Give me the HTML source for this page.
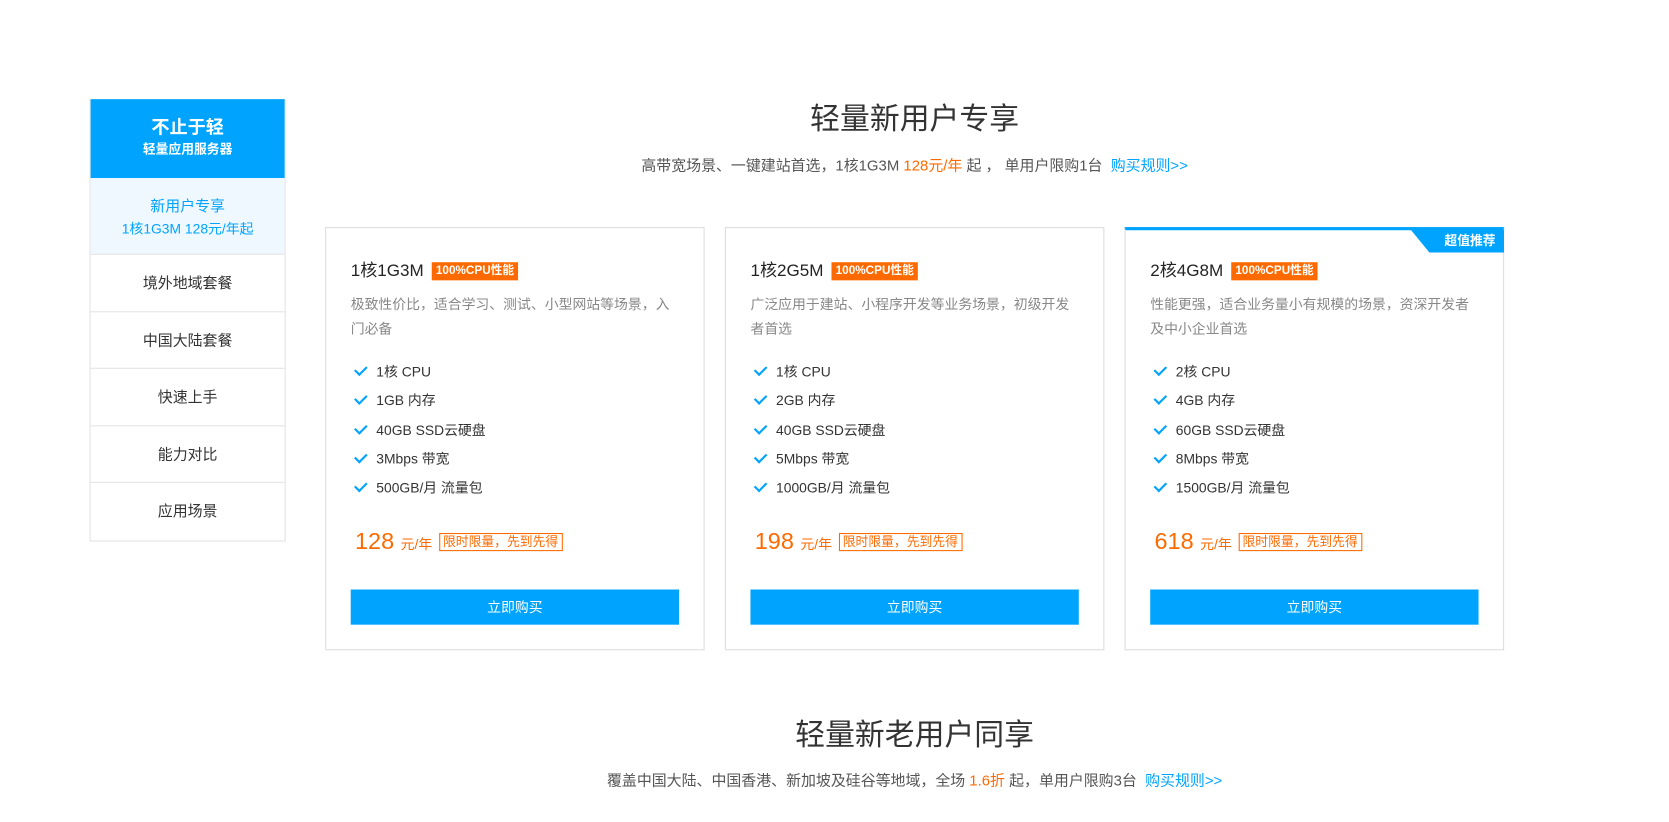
<!DOCTYPE html>
<html><head><meta charset="utf-8"><style>
*{margin:0;padding:0;box-sizing:border-box}
body{width:1669px;height:822px;background:#fff;font-family:"Liberation Sans","Noto Sans CJK SC",sans-serif;color:#333;position:relative;overflow:hidden}
#w{position:absolute;left:0;top:0;width:1560px;height:768px;transform:scale(1.066);transform-origin:0 0}
.abs{position:absolute}
.side{left:84px;top:93px;width:184px;border:1px solid #e3e3e3;border-top:none}
.sh{background:#00a4ff;color:#fff;text-align:center;height:74px;padding-top:16px}
.sh b{font-size:17px;display:block;line-height:22px}
.sh span{font-size:12px;font-weight:bold;line-height:18px}
.act{background:#f0f8ff;color:#00a4ff;text-align:center;height:72px;padding-top:16px;font-size:14px;line-height:21px;border-bottom:1px solid #e3e3e3}
.act div+div{font-size:13px}
.it{height:53.5px;line-height:53px;text-align:center;font-size:14px;border-bottom:1px solid #e3e3e3}
.it:last-child{border-bottom:none}
.h1{text-align:center;font-size:28px;color:#333}
.sub{text-align:center;font-size:14px;color:#555}
.o{color:#ff6a00}.b{color:#00a4ff}
.card{top:213px;width:356px;height:397px;border:1px solid #ddd}
.ct{position:absolute;left:23px;top:26px;font-size:16px;color:#222}
.tag{display:inline-block;background:#ff6a00;color:#fff;font-size:11px;font-weight:bold;padding:0 4px;height:17px;line-height:17px;vertical-align:2px;margin-left:3px}
.desc{position:absolute;left:23px;top:60px;width:310px;font-size:13px;color:#888;line-height:23px}
.fl{position:absolute;left:23px;top:124px;font-size:13px;color:#333}
.fl div{height:27.3px;line-height:22px;padding-left:24px;position:relative}
.fl div:before{content:"";position:absolute;left:4px;top:5px;width:9px;height:5px;border-left:2px solid #00a4ff;border-bottom:2px solid #00a4ff;transform:rotate(-45deg)}
.pr{position:absolute;left:27px;top:281px;color:#ff6a00;font-size:22px}
.pr small{font-size:13px}
.pr em{font-style:normal;font-size:12px;border:1px solid #ff6a00;padding:0 3px;vertical-align:3px;line-height:15px;display:inline-block}
.btn{position:absolute;left:23px;top:339px;width:308px;height:33px;background:#00a4ff;color:#fff;text-align:center;line-height:33px;font-size:13px}
</style></head><body><div id="w">
<div class="abs side">
<div class="sh"><b>不止于轻</b><span>轻量应用服务器</span></div>
<div class="act"><div>新用户专享</div><div>1核1G3M 128元/年起</div></div>
<div class="it">境外地域套餐</div>
<div class="it">中国大陆套餐</div>
<div class="it">快速上手</div>
<div class="it">能力对比</div>
<div class="it">应用场景</div>
</div>
<div class="abs h1" style="top:90px;left:0;width:1716px">轻量新用户专享</div>
<div class="abs sub" style="top:145px;left:0;width:1716px">高带宽场景、一键建站首选，1核1G3M <span class="o">128元/年</span> 起 ， 单用户限购1台 &nbsp;<span class="b">购买规则&gt;&gt;</span></div>

<div class="abs card" style="left:305px">
<div class="ct">1核1G3M <span class="tag">100%CPU性能</span></div>
<div class="desc">极致性价比，适合学习、测试、小型网站等场景，入门必备</div>
<div class="fl"><div>1核 CPU</div><div>1GB 内存</div><div>40GB SSD云硬盘</div><div>3Mbps 带宽</div><div>500GB/月 流量包</div></div>
<div class="pr">128 <small>元/年</small> <em>限时限量，先到先得</em></div>
<div class="btn">立即购买</div>
</div>
<div class="abs card" style="left:680px">
<div class="ct">1核2G5M <span class="tag">100%CPU性能</span></div>
<div class="desc">广泛应用于建站、小程序开发等业务场景，初级开发者首选</div>
<div class="fl"><div>1核 CPU</div><div>2GB 内存</div><div>40GB SSD云硬盘</div><div>5Mbps 带宽</div><div>1000GB/月 流量包</div></div>
<div class="pr">198 <small>元/年</small> <em>限时限量，先到先得</em></div>
<div class="btn">立即购买</div>
</div>
<div class="abs card" style="left:1055px;border-top:3px solid #00a4ff">
<div class="abs" style="right:-1px;top:-1px;width:88px;height:22px;background:#00a4ff;clip-path:polygon(0 0,100% 0,100% 100%,18px 100%);color:#fff;font-size:12px;font-weight:bold;line-height:22px;text-align:right;padding-right:8px">超值推荐</div>
<div class="ct" style="top:24px">2核4G8M <span class="tag">100%CPU性能</span></div>
<div class="desc" style="top:58px">性能更强，适合业务量小有规模的场景，资深开发者及中小企业首选</div>
<div class="fl" style="top:122px"><div>2核 CPU</div><div>4GB 内存</div><div>60GB SSD云硬盘</div><div>8Mbps 带宽</div><div>1500GB/月 流量包</div></div>
<div class="pr" style="top:279px">618 <small>元/年</small> <em>限时限量，先到先得</em></div>
<div class="btn" style="top:337px">立即购买</div>
</div>

<div class="abs h1" style="top:668px;left:0;width:1716px">轻量新老用户同享</div>
<div class="abs sub" style="top:722px;left:0;width:1716px">覆盖中国大陆、中国香港、新加坡及硅谷等地域，全场 <span class="o">1.6折</span> 起，单用户限购3台 &nbsp;<span class="b">购买规则&gt;&gt;</span></div>
</div></body></html>
